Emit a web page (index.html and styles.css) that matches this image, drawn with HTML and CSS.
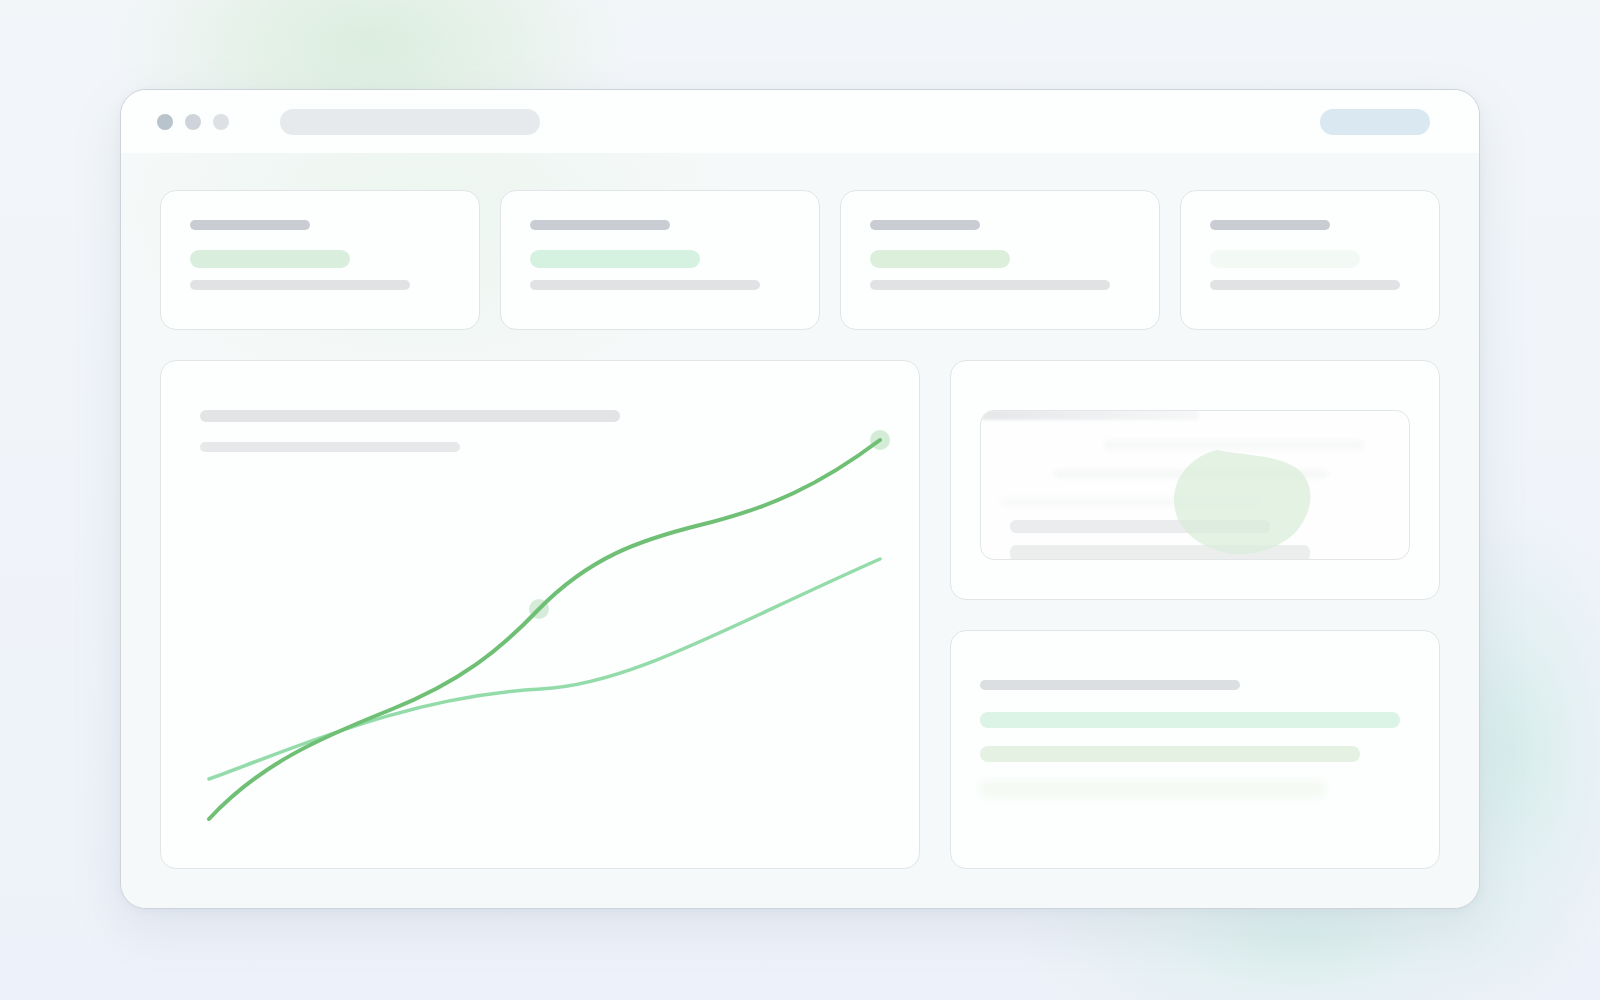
FILE: index.html
```html
<!DOCTYPE html>
<html lang="en">
<head>
<meta charset="utf-8">
<title>Dashboard</title>
<link rel="stylesheet" href="styles.css">
</head>
<body>
<div class="glow glow-tl"></div>
<div class="glow glow-br"></div>
<div class="glow glow-b"></div>
<div class="stage">
  <div class="window">
    <div class="titlebar">
      <div class="dots">
        <span class="dot d1"></span>
        <span class="dot d2"></span>
        <span class="dot d3"></span>
      </div>
      <div class="address"></div>
      <div class="spacer"></div>
      <div class="action"></div>
    </div>
    <div class="content">
      <div class="stats">
        <div class="card stat">
          <div class="bar label" style="width:120px"></div>
          <div class="bar value v1" style="width:160px"></div>
          <div class="bar sub" style="width:220px"></div>
        </div>
        <div class="card stat">
          <div class="bar label" style="width:140px"></div>
          <div class="bar value v2" style="width:170px"></div>
          <div class="bar sub" style="width:230px"></div>
        </div>
        <div class="card stat">
          <div class="bar label" style="width:110px"></div>
          <div class="bar value v3" style="width:140px"></div>
          <div class="bar sub" style="width:240px"></div>
        </div>
        <div class="card stat">
          <div class="bar label" style="width:120px"></div>
          <div class="bar value v4" style="width:150px"></div>
          <div class="bar sub" style="width:190px"></div>
        </div>
      </div>
      <div class="main">
        <div class="card chart">
          <div class="bar ctitle" style="width:420px"></div>
          <div class="bar csub" style="width:260px"></div>
          <svg class="plot" viewBox="0 0 760 510" width="760" height="510">
            <path d="M49,419 C140,386 250,336 381,329 C470,324 560,270 720,199" fill="none" stroke="#93dcaa" stroke-width="3.5" stroke-linecap="round"/>
            <circle cx="379" cy="249" r="10" fill="#cfe9d1" opacity="0.85"/>
            <circle cx="720" cy="80" r="10" fill="#cfe9d1" opacity="0.9"/>
            <path d="M49,459 C100,404 160,378 230,350 C300,322 340,290 379,249 C430,197 480,180 540,165 C610,148 660,125 720,80" fill="none" stroke="#6fbf75" stroke-width="4" stroke-linecap="round"/>
          </svg>
        </div>
        <div class="side">
          <div class="card panel-top">
            <div class="inner">
              <div class="ibar ih"></div>
              <div class="ibar if1"></div>
              <div class="ibar if2"></div>
              <div class="ibar if3"></div>
              <div class="ibar ib1"></div>
              <div class="ibar ib2"></div>
              <svg class="blob" viewBox="0 0 140 110" width="140" height="110">
                <path d="M43,2 C70,8 105,6 125,22 C142,38 140,64 120,86 C100,104 70,110 48,104 C20,96 0,78 0,52 C0,28 18,8 43,2 Z" fill="#d9ecd8" opacity="0.7"/>
              </svg>
            </div>
          </div>
          <div class="card panel-bottom">
            <div class="bar pl" style="width:260px"></div>
            <div class="bar pg1" style="width:420px"></div>
            <div class="bar pg2" style="width:380px"></div>
            <div class="bar pg3" style="width:345px"></div>
          </div>
        </div>
      </div>
    </div>
  </div>
</div>
</body>
</html>
```

FILE: styles.css
```css
* { box-sizing: border-box; }

html, body {
  margin: 0;
  padding: 0;
}

body {
  width: 1600px;
  height: 1000px;
  overflow: hidden;
  background: linear-gradient(180deg, #f3f6f9 0%, #f0f4f9 45%, #edf1f9 100%);
  font-family: "Inter", "Liberation Sans", sans-serif;
  position: relative;
}

.glow {
  position: absolute;
  pointer-events: none;
}

.glow-tl {
  left: 110px;
  top: -110px;
  width: 520px;
  height: 310px;
  background: radial-gradient(closest-side, rgba(218, 237, 220, 0.95) 0%, rgba(224, 240, 226, 0.7) 45%, rgba(242, 246, 249, 0) 100%);
}

.glow-br {
  left: 1380px;
  top: 500px;
  width: 260px;
  height: 500px;
  background: radial-gradient(closest-side, rgba(212, 236, 233, 0.9) 0%, rgba(218, 238, 236, 0.55) 45%, rgba(238, 242, 248, 0) 100%);
}

.glow-b {
  left: 1020px;
  top: 830px;
  width: 560px;
  height: 220px;
  background: radial-gradient(closest-side, rgba(214, 237, 232, 0.85) 0%, rgba(220, 239, 236, 0.45) 50%, rgba(238, 242, 248, 0) 100%);
}

.stage {
  position: relative;
  padding: 89px 120px 0 120px;
}

.window {
  width: 1360px;
  height: 820px;
  border-radius: 26px;
  border: 1px solid #cdd3d9;
  background: #f7f9f9;
  box-shadow: 0 18px 50px rgba(120, 140, 165, 0.14), 0 2px 8px rgba(120, 140, 165, 0.08);
  overflow: hidden;
  display: flex;
  flex-direction: column;
}

.titlebar {
  height: 63px;
  flex: none;
  display: flex;
  align-items: center;
  padding: 0 49px 0 36px;
  background: #fdfefe;
}

.dots {
  display: flex;
  gap: 12px;
}

.dot {
  width: 16px;
  height: 16px;
  border-radius: 50%;
  display: block;
}

.d1 { background: #b9c3cc; }
.d2 { background: #ced4da; }
.d3 { background: #dde1e5; }

.address {
  margin-left: 51px;
  width: 260px;
  height: 26px;
  border-radius: 13px;
  background: #e7eaec;
}

.spacer { flex: 1; }

.action {
  width: 110px;
  height: 26px;
  border-radius: 13px;
  background: #d9e8f1;
}

.content {
  flex: 1;
  min-height: 0;
  display: flex;
  flex-direction: column;
  gap: 30px;
  padding: 37px 39px 39px 39px;
  background:
    radial-gradient(ellipse 320px 200px at 300px 60px, rgba(226, 242, 230, 0.5), rgba(247, 249, 249, 0) 100%),
    #f6f9f9;
}

.card {
  background: #fdfefe;
  border: 1px solid #e1e5e7;
  border-radius: 16px;
}

.stats {
  display: grid;
  grid-template-columns: 320px 320px 320px 260px;
  gap: 20px;
  height: 140px;
  flex: none;
}

.stat {
  display: flex;
  flex-direction: column;
  align-items: flex-start;
  padding: 29px 29px;
}

.bar {
  border-radius: 8px;
  flex: none;
}

.label {
  height: 10px;
  background: #c9cdd3;
}

.value {
  height: 18px;
  margin-top: 20px;
  border-radius: 9px;
}

.v1 { background: #d9eedc; }
.v2 { background: #d5f1df; }
.v3 { background: #dcefdb; }
.v4 { background: #f3faf6; }

.sub {
  height: 10px;
  margin-top: 12px;
  background: #e0e2e4;
}

.main {
  flex: 1;
  min-height: 0;
  display: grid;
  grid-template-columns: 760px 490px;
  grid-template-rows: minmax(0, 1fr);
  gap: 30px;
}

.chart {
  position: relative;
  padding: 49px 39px;
  display: flex;
  flex-direction: column;
  min-height: 0;
}

.ctitle {
  height: 12px;
  background: #e2e4e6;
}

.csub {
  height: 10px;
  margin-top: 20px;
  background: #e6e8e9;
}

.plot {
  position: absolute;
  left: -1px;
  top: -1px;
  overflow: visible;
}

.side {
  display: grid;
  grid-template-rows: minmax(0, 1fr) minmax(0, 1fr);
  gap: 30px;
  min-height: 0;
}

.panel-top {
  padding: 49px 29px 39px 29px;
  display: flex;
  min-height: 0;
}

.inner {
  position: relative;
  flex: 1;
  border: 1px solid #e3e6e8;
  border-radius: 14px;
  background: #fefefe;
  overflow: hidden;
  display: flex;
  flex-direction: column;
  align-items: flex-start;
}

.ibar {
  flex: none;
  border-radius: 6px;
}

.ih {
  width: 220px;
  height: 10px;
  margin-top: -1px;
  margin-left: -1px;
  background: linear-gradient(90deg, #e4e6e8, rgba(236, 238, 239, 0.4));
  filter: blur(1.5px);
}

.if1 {
  width: 260px;
  height: 10px;
  margin-top: 20px;
  margin-left: 123px;
  background: #f7f8f8;
  filter: blur(2px);
}

.if2 {
  width: 274px;
  height: 8px;
  margin-top: 20px;
  margin-left: 73px;
  background: #f6f7f7;
  filter: blur(2px);
}

.if3 {
  width: 260px;
  height: 8px;
  margin-top: 20px;
  margin-left: 20px;
  background: #f8f9f9;
  filter: blur(2px);
}

.ib1 {
  width: 260px;
  height: 13px;
  margin-top: 14px;
  margin-left: 29px;
  background: #eaeced;
}

.ib2 {
  width: 300px;
  height: 16px;
  margin-top: 12px;
  margin-left: 29px;
  background: #eceeee;
}

.blob {
  position: absolute;
  left: 193px;
  top: 37px;
}

.panel-bottom {
  padding: 49px 29px;
  display: flex;
  flex-direction: column;
  align-items: flex-start;
  min-height: 0;
}

.pl {
  height: 10px;
  background: #dcdfe1;
}

.pg1 {
  height: 16px;
  margin-top: 22px;
  background: #dcf4e6;
}

.pg2 {
  height: 16px;
  margin-top: 18px;
  background: #e5f2e3;
}

.pg3 {
  height: 18px;
  margin-top: 18px;
  background: #f5faf4;
  filter: blur(3px);
}
```
